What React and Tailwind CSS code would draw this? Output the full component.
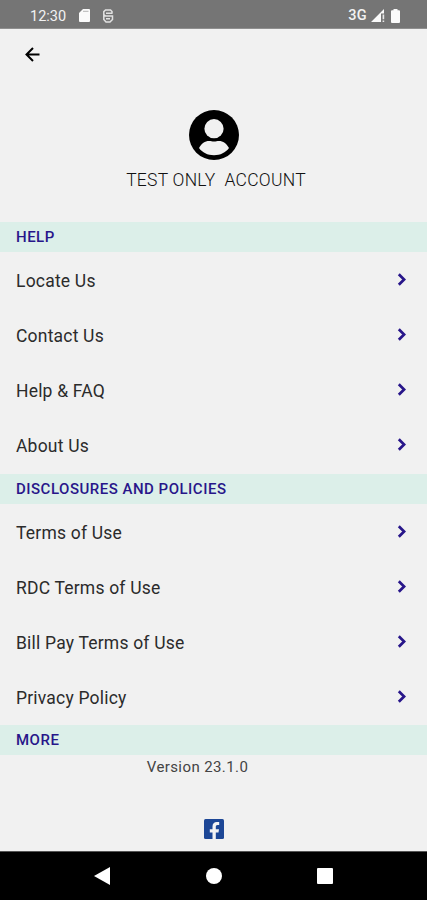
const sections = [
  {
    title: "HELP",
    items: ["Locate Us", "Contact Us", "Help & FAQ", "About Us"],
  },
  {
    title: "DISCLOSURES AND POLICIES",
    items: [
      "Terms of Use",
      "RDC Terms of Use",
      "Bill Pay Terms of Use",
      "Privacy Policy",
    ],
  },
];

const StatusBar = () => (
  <div className="flex h-[29px] shrink-0 items-center border-b border-[#8f8f8f] bg-[#757575] pt-[3px] pr-[27px] pl-[30px] text-[#f2f2f2]">
    <span className="pt-[3px] text-[14.5px] leading-none">12:30</span>
    <svg className="ml-[13px] h-[13px] w-[11px]" viewBox="0 0 11 13" fill="none">
      <path
        d="M4 0h6a1 1 0 0 1 1 1v11a1 1 0 0 1-1 1H1a1 1 0 0 1-1-1V4z"
        fill="#fafafa"
      />
      <path d="M4 2.3h5.5" stroke="#b5b5b5" />
    </svg>
    <svg
      className="ml-3 h-[14px] w-[12px]"
      viewBox="0 0 12 14"
      fill="none"
      stroke="#e2e2e2"
      strokeWidth="1.5"
    >
      <path d="M10.500 4.200H4M10 4.200V2.600L8.500 1h-5L1.800 2.600v3L3.500 7h7v3.500L8 13H4l-2.200-2.500V7H4M4 9.800h4" />
    </svg>
    <span className="ml-auto pt-px text-[14.5px] leading-none font-medium tracking-[0.3px]">
      3G
    </span>
    <svg className="ml-[4px] h-[13px] w-[14px]" viewBox="0 0 14 13">
      <path d="M0 13 13 0v4.5h-3V13z" fill="#fafafa" />
      <path d="M11.6 5.5h1.6v4.7h-1.6zM11.6 11.4h1.6V13h-1.6z" fill="#e8e8e8" />
    </svg>
    <svg className="ml-[6px] h-[14px] w-[9px]" viewBox="0 0 9 14" fill="#fafafa">
      <path d="M2.500 0h4v1.300H8a1 1 0 0 1 1 1V13a1 1 0 0 1-1 1H1a1 1 0 0 1-1-1V2.300a1 1 0 0 1 1-1h1.500z" />
    </svg>
  </div>
);

const SectionTitle = ({ children }) => (
  <h2 className="flex h-[30px] items-center bg-[#dcefe9] pt-px pl-4 text-[15px] font-medium tracking-[0.5px] text-[#28168a]">
    {children}
  </h2>
);

const Row = ({ label }) => (
  <button className="flex h-[55px] w-full items-center justify-between pt-[4px] pr-[21px] pl-4 text-left text-[17.5px] tracking-[0.2px] text-[#2b2b2b]">
    {label}
    <svg
      className="mb-[5px] h-[13px] w-[9px]"
      viewBox="0 0 9 13"
      fill="none"
      stroke="#28168a"
      strokeWidth="2.7"
    >
      <path d="m1.8 1.2 5.3 5.3-5.3 5.3" />
    </svg>
  </button>
);

const NavBar = () => (
  <div className="flex h-[49px] shrink-0 items-center justify-between border-t border-[#555] bg-black pr-[94px] pl-[94px]">
    <svg className="h-[18px] w-4" viewBox="0 0 16 18" fill="#fff">
      <path d="M0 9 16 0v18z" />
    </svg>
    <span className="size-4 rounded-full bg-white" />
    <span className="size-4 rounded-[1px] bg-white" />
  </div>
);

export default function App() {
  return (
    <div className="flex h-[900px] w-[427px] flex-col overflow-hidden bg-[#f1f1f1] font-['Roboto',sans-serif]">
      <StatusBar />
      <header className="flex h-[193px] shrink-0 flex-col">
        <button className="mt-[18px] ml-[25px] size-[15px]" aria-label="Back">
          <svg
            className="block size-[15px]"
            viewBox="0 0 15 15"
            fill="none"
            stroke="#000"
            strokeWidth="2"
          >
            <path d="M14.5 7.5H1.5M8 1 1.5 7.5 8 14" />
          </svg>
        </button>
        <div className="mt-12 flex flex-col items-center">
          <svg className="size-[50px]" viewBox="0 0 50 50">
            <circle cx="25" cy="25" r="25" fill="#000" />
            <circle cx="25" cy="18.7" r="9.6" fill="#f1f1f1" />
            <path
              d="M10 38c2.500-4.500 6-7 10-7 2 0 3 .6 5 .6s3-.6 5-.6c4 0 7.500 2.500 10 7-3.500 4.700-8.500 7.200-15 7.200S13.500 42.700 10 38z"
              fill="#f1f1f1"
            />
          </svg>
          <p className="mt-2 ml-[5px] text-[17.5px] leading-6 font-light tracking-[0.25px] whitespace-pre text-[#111]">
            TEST ONLY{"  "}ACCOUNT
          </p>
        </div>
      </header>
      <main className="flex flex-1 flex-col">
        {sections.map((section) => (
          <section key={section.title} className="pb-[2px]">
            <SectionTitle>{section.title}</SectionTitle>
            {section.items.map((item) => (
              <Row key={item} label={item} />
            ))}
          </section>
        ))}
        <section className="-mt-px flex flex-col">
          <SectionTitle>MORE</SectionTitle>
          <p className="mt-px pr-[32px] text-center text-[15px] leading-[22px] tracking-[0.4px] text-[#444]">
            Version 23.1.0
          </p>
          <svg
            className="mt-[41px] size-5 self-center"
            viewBox="0 0 20 20"
            fill="#1d4796"
          >
            <rect width="20" height="20" rx="1.5" />
            <path
              d="M8.500 20v-6.500H5.800v-3.300h2.700V7.500c0-2.900 1.700-4.500 4.300-4.500h2.400v3h-1.600c-1.300 0-1.800.7-1.800 1.900v2.300h3.200l-.5 3.300h-2.700V20z"
              fill="#f4f4f4"
            />
          </svg>
        </section>
      </main>
      <NavBar />
    </div>
  );
}
